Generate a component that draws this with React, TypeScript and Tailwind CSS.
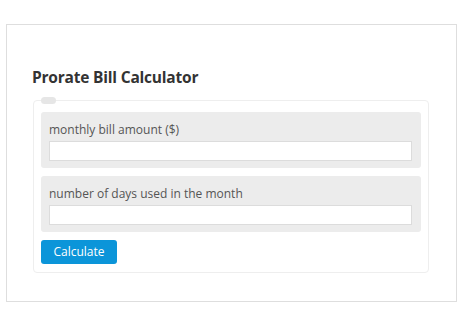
import React from "react";

const fields = ["monthly bill amount ($)", "number of days used in the month"];

export default function App() {
  return (
    <div className="w-[474px] h-[322px] bg-white pt-[24px] pl-[6px]" style={{ fontFamily: '"Open Sans", "Noto Sans", sans-serif' }}>
      <div className="w-[451px] h-[278px] border border-[#dedede] pt-[41px] pl-[26px]">
        <h1 className="-ml-[1px] text-[15.5px] leading-[22px] font-bold text-[#333] tracking-[-0.2px]">Prorate Bill Calculator</h1>
        <div className="relative mt-[12px] w-[396px] h-[173px] border border-[#eeeeee] rounded-[4px] pt-[11px] px-[7px]">
          <div className="absolute left-[7px] top-[-4px] w-[15px] h-[7px] rounded-full bg-[#e6e6e6]" />
          <div className="flex flex-col gap-[8px]">
            {fields.map((f) => (
              <div key={f} className="h-[56px] bg-[#ececec] rounded-[3px] px-[8px] pt-[9px]">
                <div className="text-[12px] leading-[18px] text-[#555]">{f}</div>
                <input type="text" className="mt-[2px] w-[363px] h-[20px] bg-white border border-[#dcdcdc] outline-none" />
              </div>
            ))}
          </div>
          <button className="mt-[8px] w-[76px] h-[24px] rounded-[3px] bg-[#0b95d9] text-white text-[12px]">Calculate</button>
        </div>
      </div>
    </div>
  );
}
